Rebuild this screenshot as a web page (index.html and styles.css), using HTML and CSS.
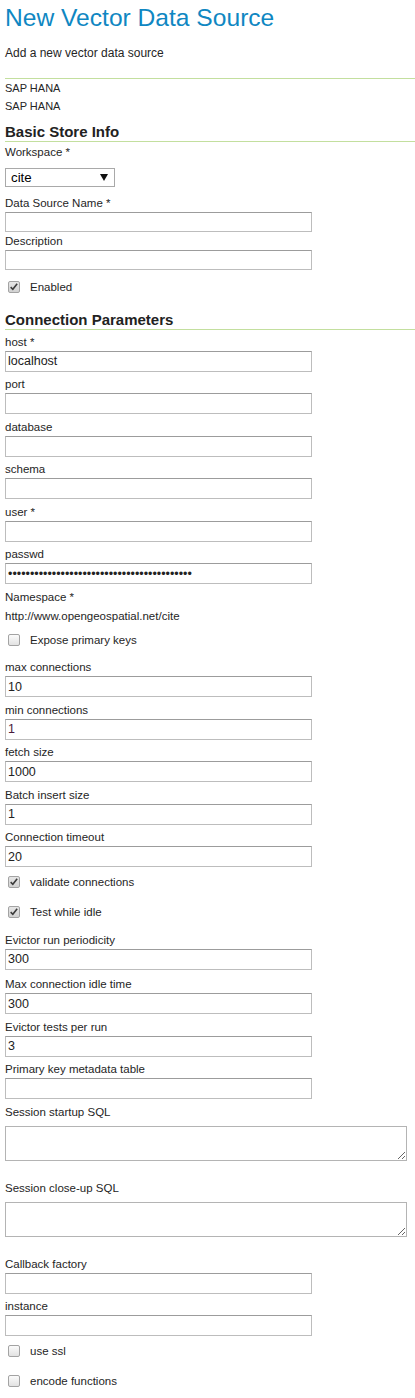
FILE: index.html
```html
<!DOCTYPE html>
<html>
<head>
<meta charset="utf-8">
<title>New Vector Data Source</title>
<link rel="stylesheet" href="styles.css">
</head>
<body>
<div class="page">
  <h1 class="title">New Vector Data Source</h1>
  <p class="subtitle">Add a new vector data source</p>

  <div class="store-type">
    <div class="store-line">SAP HANA</div>
    <div class="store-line">SAP HANA</div>
  </div>

  <h2 class="section section-first">Basic Store Info</h2>
  <div class="basic">
    <label class="lbl lbl-ws">Workspace *</label>
    <div class="select-wrap">
      <select class="select"><option>cite</option></select>
    </div>
    <div class="bfield">
      <label class="lbl">Data Source Name *</label>
      <input class="inp inp-basic" type="text">
    </div>
    <div class="bfield">
      <label class="lbl">Description</label>
      <input class="inp inp-basic" type="text">
    </div>
    <div class="check check-basic"><span class="cb cb-on"><svg viewBox="0 0 12 12" width="10" height="10"><path d="M2 6.2 L4.6 8.8 L9.8 2.2" fill="none" stroke="#3c3c3c" stroke-width="1.9"/></svg></span><span class="check-text">Enabled</span></div>
  </div>

  <h2 class="section">Connection Parameters</h2>
  <div class="conn">
    <div class="field field-first"><label class="lbl">host *</label><input class="inp" type="text" value="localhost"></div>
    <div class="field"><label class="lbl">port</label><input class="inp" type="text"></div>
    <div class="field"><label class="lbl">database</label><input class="inp" type="text"></div>
    <div class="field"><label class="lbl">schema</label><input class="inp" type="text"></div>
    <div class="field"><label class="lbl">user *</label><input class="inp" type="text"></div>
    <div class="field"><label class="lbl">passwd</label><input class="inp" type="password" value="xxxxxxxxxxxxxxxxxxxxxxxxxxxxxxxxxxxxxxxxxx"></div>
    <div class="field"><label class="lbl">Namespace *</label><div class="ns">http://www.opengeospatial.net/cite</div></div>
    <div class="check"><span class="cb"></span><span class="check-text">Expose primary keys</span></div>
    <div class="field"><label class="lbl">max connections</label><input class="inp" type="text" value="10"></div>
    <div class="field"><label class="lbl">min connections</label><input class="inp inp-alt" type="text" value="1"></div>
    <div class="field"><label class="lbl">fetch size</label><input class="inp" type="text" value="1000"></div>
    <div class="field"><label class="lbl">Batch insert size</label><input class="inp" type="text" value="1"></div>
    <div class="field"><label class="lbl">Connection timeout</label><input class="inp" type="text" value="20"></div>
    <div class="check"><span class="cb cb-on"><svg viewBox="0 0 12 12" width="10" height="10"><path d="M2 6.2 L4.6 8.8 L9.8 2.2" fill="none" stroke="#3c3c3c" stroke-width="1.9"/></svg></span><span class="check-text">validate connections</span></div>
    <div class="check"><span class="cb cb-on"><svg viewBox="0 0 12 12" width="10" height="10"><path d="M2 6.2 L4.6 8.8 L9.8 2.2" fill="none" stroke="#3c3c3c" stroke-width="1.9"/></svg></span><span class="check-text">Test while idle</span></div>
    <div class="field field-wide"><label class="lbl">Evictor run periodicity</label><input class="inp" type="text" value="300"></div>
    <div class="field"><label class="lbl">Max connection idle time</label><input class="inp" type="text" value="300"></div>
    <div class="field"><label class="lbl">Evictor tests per run</label><input class="inp" type="text" value="3"></div>
    <div class="field"><label class="lbl">Primary key metadata table</label><input class="inp" type="text"></div>
    <div class="tfield"><label class="lbl">Session startup SQL</label><textarea class="area"></textarea></div>
    <div class="tfield"><label class="lbl">Session close-up SQL</label><textarea class="area"></textarea></div>
    <div class="field"><label class="lbl">Callback factory</label><input class="inp" type="text"></div>
    <div class="field"><label class="lbl">instance</label><input class="inp" type="text"></div>
    <div class="check"><span class="cb"></span><span class="check-text">use ssl</span></div>
    <div class="check"><span class="cb"></span><span class="check-text">encode functions</span></div>
  </div>
</div>
</body>
</html>
```
FILE: styles.css
```css
* { box-sizing: border-box; }

html, body {
  margin: 0;
  padding: 0;
  background: #ffffff;
}

body {
  font-family: "Liberation Sans", Arial, sans-serif;
  color: #252525;
  font-size: 11.5px;
}

.page {
  padding: 0 0 0 5px;
}

.title {
  margin: 0;
  padding-top: 4px;
  font-weight: normal;
  font-size: 24.6px;
  line-height: 28px;
  color: #0f87c2;
}

.subtitle {
  margin: 12px 0 0 0;
  font-size: 12px;
  line-height: 18px;
}

.store-type {
  margin-top: 16px;
  border-top: 1px solid #c3df9e;
}

.store-line {
  font-size: 11px;
  line-height: 18px;
}

.section {
  margin: 12px 0 0 0;
  font-size: 15px;
  font-weight: bold;
  line-height: 18px;
  border-bottom: 1px solid #c3df9e;
  color: #222;
}

.section-first {
  margin-top: 8px;
}

.lbl {
  display: block;
  font-size: 11.5px;
  line-height: 18px;
}

.lbl-ws {
  margin-top: 1px;
}

.select-wrap {
  position: relative;
  width: 110px;
  margin-top: 7px;
  margin-bottom: 7px;
}

.select {
  display: block;
  appearance: none;
  -webkit-appearance: none;
  width: 110px;
  height: 19px;
  margin: 0;
  padding: 0 0 0 5px;
  border: 1px solid #a9a9a9;
  border-radius: 0;
  background: #ffffff;
  font-family: "Liberation Sans", Arial, sans-serif;
  font-size: 13.3px;
  color: #000;
}

.select-wrap::after {
  content: "";
  position: absolute;
  right: 7px;
  top: 6px;
  width: 0;
  height: 0;
  border-left: 4px solid transparent;
  border-right: 4px solid transparent;
  border-top: 7px solid #111;
}

.inp {
  display: block;
  width: 307px;
  height: 21px;
  margin: 0;
  padding: 0 2px;
  border: 1px solid #bdbdbd;
  border-top-color: #9c9c9c;
  border-radius: 0;
  background: #fff;
  font-family: "Liberation Sans", Arial, sans-serif;
  font-size: 12.5px;
  color: #222;
  outline: none;
}

.inp-basic {
  height: 20px;
}

.inp-alt {
  color: #4a1a3c;
}

.field {
  margin-bottom: 3.5px;
}

.field-first {
  margin-top: 3px;
}

.field-wide {
  margin-bottom: 5.5px;
}

.ns {
  margin-top: 1px;
  font-size: 11.5px;
  line-height: 18px;
}

.tfield {
  margin-bottom: 17.5px;
}

.area {
  display: block;
  width: 402px;
  height: 35.5px;
  margin: 5px 0 0 0;
  padding: 2px;
  border: 1px solid #b4b4b4;
  border-radius: 0;
  background: #fff;
  font-family: "Liberation Sans", Arial, sans-serif;
  font-size: 12.5px;
  resize: both;
}

.check {
  display: flex;
  align-items: center;
  height: 23px;
  margin: 3px 0 7px 0;
  padding-left: 3px;
}

.check-basic {
  margin-top: 5.5px;
}

.cb {
  display: flex;
  align-items: center;
  justify-content: center;
  width: 12px;
  height: 12px;
  border: 1px solid #a3a3a3;
  border-radius: 2px;
  background: linear-gradient(#fbfbfb, #e2e2e2);
  flex: none;
}

.cb-on {
  background: linear-gradient(#e6e6e6, #d2d2d2);
}

.cb svg {
  display: block;
}

.check-text {
  margin-left: 10px;
  font-size: 11.5px;
  line-height: 18px;
}
```
